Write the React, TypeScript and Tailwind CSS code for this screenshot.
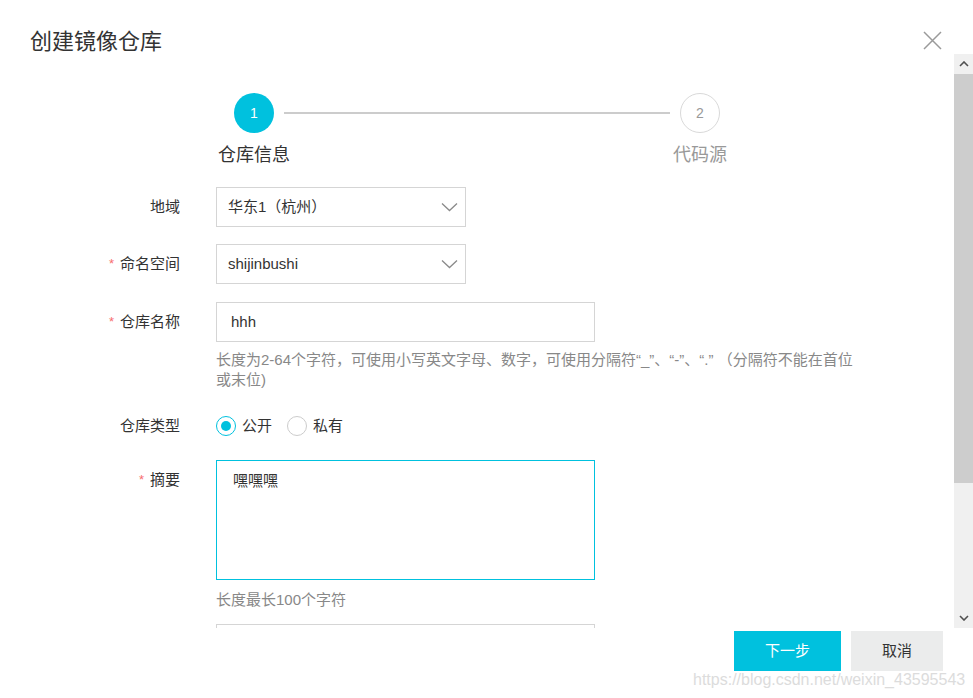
import React from "react";

const FONT = "font-['Liberation_Sans','Noto_Sans_CJK_SC',sans-serif]";

const Chevron = () => (
  <svg width="17" height="10" viewBox="0 0 17 10" className="shrink-0">
    <path d="M1 1.5 L8.5 8.5 L16 1.5" fill="none" stroke="#8a8a8a" strokeWidth="1.3" />
  </svg>
);

const Label = ({ text, required }: { text: string; required?: boolean }) => (
  <div className="w-[180px] shrink-0 flex justify-end items-center text-[15px] leading-[20px] text-[#333]">
    {required && <span className="text-[#f76e6e] mr-[6px] text-[13px]">*</span>}
    <span>{text}</span>
  </div>
);

const Select = ({ value }: { value: string }) => (
  <div className="ml-[36px] w-[250px] h-[40px] border border-[#d5d5d5] flex items-center justify-between pl-[11px] pr-[7px] text-[15px] text-[#333]">
    <span>{value}</span>
    <Chevron />
  </div>
);

const Radio = ({ checked, text }: { checked?: boolean; text: string }) => (
  <div className="flex items-center h-[20px]">
    <div
      className={
        checked
          ? "w-[20px] h-[20px] rounded-full border border-[#00c1de] flex items-center justify-center"
          : "w-[20px] h-[20px] rounded-full border border-[#cccccc]"
      }
    >
      {checked && <div className="w-[10px] h-[10px] rounded-full bg-[#00c1de]" />}
    </div>
    <span className="ml-[6px] text-[15px] leading-[20px] text-[#333]">{text}</span>
  </div>
);

export default function App() {
  return (
    <div className={`w-[973px] h-[698px] bg-white relative overflow-hidden ${FONT}`}>
      {/* header */}
      <div className="h-[54px] flex justify-between items-start pl-[30px] pr-[31px]">
        <div className="pt-[28px] text-[22px] leading-[28px] text-[#333]">创建镜像仓库</div>
        <svg width="19" height="19" viewBox="0 0 19 19" className="mt-[31px]">
          <path d="M1 1 L18 18 M18 1 L1 18" stroke="#9a9a9a" strokeWidth="1.5" />
        </svg>
      </div>

      {/* body */}
      <div className="h-[574px] flex">
        <div className="flex-1 overflow-hidden">
          {/* steps */}
          <div className="pt-[39px] flex items-center pl-[234px]">
            <div className="w-[40px] h-[40px] rounded-full bg-[#00c1de] text-white text-[14px] flex items-center justify-center">
              1
            </div>
            <div className="ml-[10px] mr-[10px] w-[386px] h-[2px] bg-[#cccccc]" />
            <div className="w-[40px] h-[40px] rounded-full border border-[#d9d9d9] text-[#999] text-[14px] flex items-center justify-center">
              2
            </div>
          </div>
          <div className="mt-[10px] flex text-[18px] leading-[24px]">
            <div className="ml-[204px] w-[100px] text-center text-[#333]">仓库信息</div>
            <div className="ml-[346px] w-[100px] text-center text-[#999]">代码源</div>
          </div>

          {/* form */}
          <div className="mt-[20px] flex">
            <Label text="地域" />
            <Select value="华东1（杭州）" />
          </div>
          <div className="mt-[17px] flex">
            <Label text="命名空间" required />
            <Select value="shijinbushi" />
          </div>
          <div className="mt-[18px] flex">
            <Label text="仓库名称" required />
            <div className="ml-[36px] w-[379px] h-[40px] border border-[#d5d5d5] flex items-center pl-[14px] text-[15px] text-[#333]">
              hhh
            </div>
          </div>
          <div className="mt-[8px] ml-[216px] text-[15px] leading-[20px] text-[#888] whitespace-nowrap">
            长度为2-64个字符，可使用小写英文字母、数字，可使用分隔符“_”、“-”、“.” （分隔符不能在首位
            <br />
            或末位)
          </div>
          <div className="mt-[26px] flex items-center h-[20px]">
            <Label text="仓库类型" />
            <div className="ml-[36px] flex items-center gap-[15px]">
              <Radio checked text="公开" />
              <Radio text="私有" />
            </div>
          </div>
          <div className="mt-[24px] flex">
            <div className="w-[180px] shrink-0 pt-[10px] flex justify-end items-center text-[15px] leading-[20px] text-[#333] h-[30px]">
              <span className="text-[#f76e6e] mr-[6px] text-[13px]">*</span>
              <span>摘要</span>
            </div>
            <div className="ml-[36px] w-[379px] h-[120px] border border-[#00c1de] pl-[16px] pt-[10px] text-[15px] leading-[20px] text-[#333]">
              嘿嘿嘿
            </div>
          </div>
          <div className="mt-[10px] ml-[216px] text-[15px] leading-[20px] text-[#888]">长度最长100个字符</div>
          <div className="mt-[14px] ml-[216px] w-[379px] h-[40px] border border-[#d5d5d5]" />
        </div>

        {/* scrollbar */}
        <div className="w-[19px] bg-[#f0f0f0] flex flex-col">
          <div className="h-[20px] flex items-center justify-center">
            <svg width="10" height="6" viewBox="0 0 10 6">
              <path d="M1 5 L5 1 L9 5" fill="none" stroke="#505050" strokeWidth="1.6" />
            </svg>
          </div>
          <div className="h-[409px] bg-[#cdcdcd]" />
          <div className="flex-1" />
          <div className="h-[20px] flex items-center justify-center">
            <svg width="10" height="6" viewBox="0 0 10 6">
              <path d="M1 1 L5 5 L9 1" fill="none" stroke="#505050" strokeWidth="1.6" />
            </svg>
          </div>
        </div>
      </div>

      {/* footer */}
      <div className="h-[70px] flex justify-end items-start pt-[3px] pr-[30px] gap-[10px]">
        <button className="w-[107px] h-[40px] bg-[#00c1de] text-white text-[15px]">下一步</button>
        <button className="w-[92px] h-[40px] bg-[#ebecec] text-[#333] text-[15px]">取消</button>
      </div>

      <div className="absolute left-[693px] top-[670px] text-[16px] leading-[20px] text-[#dcdcdc] font-['Liberation_Sans',sans-serif] pointer-events-none">
        https://blog.csdn.net/weixin_43595543
      </div>
    </div>
  );
}
